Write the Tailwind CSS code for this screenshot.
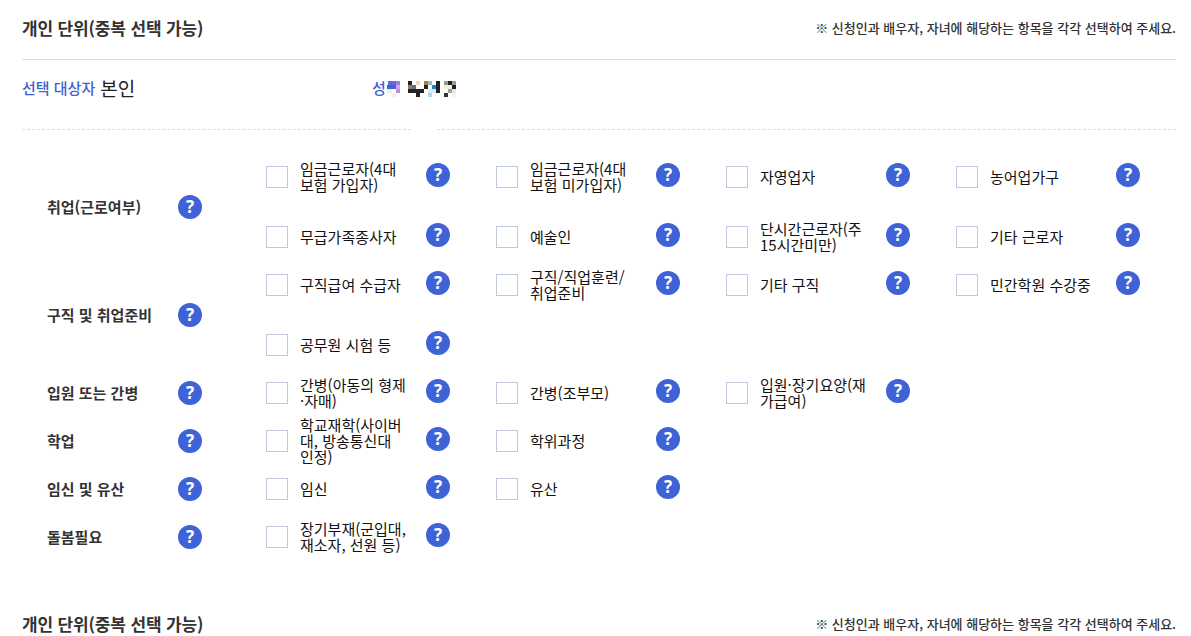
<!DOCTYPE html>
<html lang="ko">
<head>
<meta charset="utf-8">
<script src="https://cdn.jsdelivr.net/npm/@tailwindcss/browser@4"></script>
</head>
<body class="bg-white overflow-hidden font-['Noto_Sans_CJK_KR','Noto_Sans',sans-serif] text-[#111]">
<div class="w-[1191px] h-[636px] overflow-hidden pl-[22px] pr-[15px]">

  <div class="flex items-center justify-between h-[59px] pb-[4px]">
    <h2 class="text-[17px] font-bold text-[#333] tracking-[-0.15px]">개인 단위(중복 선택 가능)</h2>
    <p class="text-[13px] font-medium text-[#333]">※ 신청인과 배우자, 자녀에 해당하는 항목을 각각 선택하여 주세요.</p>
  </div>
  <div class="border-t border-[#dcdde2]"></div>

  <div class="flex items-center h-[69px] pb-[12px]">
    <div class="w-[350px] flex items-center gap-[5px]">
      <span class="text-[15px] font-medium text-[#3f62d6]">선택 대상자</span>
      <span class="text-[19px] text-[#222]">본인</span>
    </div>
    <div class="flex items-center">
      <span class="text-[15px] font-medium text-[#3f62d6]">성</span>
      <svg class="block ml-px" width="69" height="16" viewBox="387 80 69 16" shape-rendering="crispEdges">
        <rect x="388" y="80" width="4" height="4" fill="#5a6ad8"/><rect x="392" y="80" width="4" height="4" fill="#7a5fd8"/><rect x="396" y="80" width="4" height="4" fill="#a07fdc"/>
        <rect x="387" y="84" width="9" height="4" fill="#3f62d6"/><rect x="396" y="84" width="4" height="4" fill="#c9a8ec"/>
        <rect x="387" y="88" width="5" height="4" fill="#fbe8e0"/><rect x="396" y="88" width="4" height="4" fill="#b48fdc"/>
        <rect x="392" y="92" width="4" height="4" fill="#f5eef0"/>
        <rect x="408" y="80" width="4" height="4" fill="#222"/><rect x="416" y="80" width="4" height="4" fill="#f5d5b0"/><rect x="424" y="80" width="4" height="4" fill="#b07850"/><rect x="428" y="80" width="4" height="4" fill="#8ac0c0"/><rect x="436" y="80" width="4" height="4" fill="#222"/><rect x="444" y="80" width="4" height="4" fill="#999"/><rect x="448" y="80" width="4" height="4" fill="#222"/><rect x="452" y="80" width="4" height="4" fill="#999"/>
        <rect x="408" y="84" width="4" height="4" fill="#a5725a"/><rect x="412" y="84" width="4" height="4" fill="#5b7080"/><rect x="424" y="84" width="4" height="4" fill="#222"/><rect x="432" y="84" width="4" height="4" fill="#2080c8"/><rect x="436" y="84" width="4" height="4" fill="#222"/><rect x="444" y="84" width="8" height="4" fill="#f5f0d5"/><rect x="452" y="84" width="4" height="4" fill="#222"/>
        <rect x="408" y="88" width="16" height="4" fill="#222"/><rect x="428" y="88" width="8" height="4" fill="#d8ecf5"/><rect x="436" y="88" width="4" height="4" fill="#222"/><rect x="448" y="88" width="4" height="4" fill="#a8a098"/><rect x="452" y="88" width="4" height="4" fill="#e3e6f5"/>
        <rect x="416" y="92" width="4" height="4" fill="#222"/><rect x="428" y="92" width="4" height="4" fill="#a5d8f8"/><rect x="444" y="92" width="4" height="4" fill="#333"/><rect x="452" y="92" width="4" height="4" fill="#f8f5e0"/>
      </svg>
    </div>
  </div>
  <div class="flex gap-[26px] items-start">
    <div class="w-[389px] border-t border-dashed border-[#dddddd]"></div>
    <div class="w-[739px] border-t border-dashed border-[#dddddd]"></div>
  </div>

  <div class="mt-[23px]">

    <!-- 취업 -->
    <div class="flex items-center">
      <div class="w-[244px] shrink-0 pl-[25px] flex items-center">
        <span class="w-[131px] text-[15px] font-bold text-[#333]">취업(근로여부)</span>
        <svg class="size-6 shrink-0" viewBox="0 0 24 24"><circle cx="12" cy="12" r="12" fill="#3f62d6"/><text x="12" y="18" text-anchor="middle" font-size="17" font-weight="700" fill="#fff" font-family="Noto Sans">?</text></svg>
      </div>
      <div class="grid grid-cols-[230px_230px_230px_230px] gap-y-[12px]">
        <div class="h-12 flex items-center"><span class="size-[22px] shrink-0 border border-[#c0c8de]"></span><span class="w-[120px] mr-[18px] pl-3 text-[15px] leading-4">임금근로자(4대 보험 가입자)</span><svg class="size-6 shrink-0 -mt-1" viewBox="0 0 24 24"><circle cx="12" cy="12" r="12" fill="#3f62d6"/><text x="12" y="18" text-anchor="middle" font-size="17" font-weight="700" fill="#fff" font-family="Noto Sans">?</text></svg></div>
        <div class="h-12 flex items-center"><span class="size-[22px] shrink-0 border border-[#c0c8de]"></span><span class="w-[120px] mr-[18px] pl-3 text-[15px] leading-4">임금근로자(4대 보험 미가입자)</span><svg class="size-6 shrink-0 -mt-1" viewBox="0 0 24 24"><circle cx="12" cy="12" r="12" fill="#3f62d6"/><text x="12" y="18" text-anchor="middle" font-size="17" font-weight="700" fill="#fff" font-family="Noto Sans">?</text></svg></div>
        <div class="h-12 flex items-center"><span class="size-[22px] shrink-0 border border-[#c0c8de]"></span><span class="w-[120px] mr-[18px] pl-3 text-[15px] leading-4">자영업자</span><svg class="size-6 shrink-0 -mt-1" viewBox="0 0 24 24"><circle cx="12" cy="12" r="12" fill="#3f62d6"/><text x="12" y="18" text-anchor="middle" font-size="17" font-weight="700" fill="#fff" font-family="Noto Sans">?</text></svg></div>
        <div class="h-12 flex items-center"><span class="size-[22px] shrink-0 border border-[#c0c8de]"></span><span class="w-[120px] mr-[18px] pl-3 text-[15px] leading-4">농어업가구</span><svg class="size-6 shrink-0 -mt-1" viewBox="0 0 24 24"><circle cx="12" cy="12" r="12" fill="#3f62d6"/><text x="12" y="18" text-anchor="middle" font-size="17" font-weight="700" fill="#fff" font-family="Noto Sans">?</text></svg></div>
        <div class="h-12 flex items-center"><span class="size-[22px] shrink-0 border border-[#c0c8de]"></span><span class="w-[120px] mr-[18px] pl-3 text-[15px] leading-4">무급가족종사자</span><svg class="size-6 shrink-0 -mt-1" viewBox="0 0 24 24"><circle cx="12" cy="12" r="12" fill="#3f62d6"/><text x="12" y="18" text-anchor="middle" font-size="17" font-weight="700" fill="#fff" font-family="Noto Sans">?</text></svg></div>
        <div class="h-12 flex items-center"><span class="size-[22px] shrink-0 border border-[#c0c8de]"></span><span class="w-[120px] mr-[18px] pl-3 text-[15px] leading-4">예술인</span><svg class="size-6 shrink-0 -mt-1" viewBox="0 0 24 24"><circle cx="12" cy="12" r="12" fill="#3f62d6"/><text x="12" y="18" text-anchor="middle" font-size="17" font-weight="700" fill="#fff" font-family="Noto Sans">?</text></svg></div>
        <div class="h-12 flex items-center"><span class="size-[22px] shrink-0 border border-[#c0c8de]"></span><span class="w-[120px] mr-[18px] pl-3 text-[15px] leading-4">단시간근로자(주15시간미만)</span><svg class="size-6 shrink-0 -mt-1" viewBox="0 0 24 24"><circle cx="12" cy="12" r="12" fill="#3f62d6"/><text x="12" y="18" text-anchor="middle" font-size="17" font-weight="700" fill="#fff" font-family="Noto Sans">?</text></svg></div>
        <div class="h-12 flex items-center"><span class="size-[22px] shrink-0 border border-[#c0c8de]"></span><span class="w-[120px] mr-[18px] pl-3 text-[15px] leading-4">기타 근로자</span><svg class="size-6 shrink-0 -mt-1" viewBox="0 0 24 24"><circle cx="12" cy="12" r="12" fill="#3f62d6"/><text x="12" y="18" text-anchor="middle" font-size="17" font-weight="700" fill="#fff" font-family="Noto Sans">?</text></svg></div>
      </div>
    </div>

    <!-- 구직 -->
    <div class="flex items-center">
      <div class="w-[244px] shrink-0 pl-[25px] flex items-center">
        <span class="w-[131px] text-[15px] font-bold text-[#333]">구직 및 취업준비</span>
        <svg class="size-6 shrink-0" viewBox="0 0 24 24"><circle cx="12" cy="12" r="12" fill="#3f62d6"/><text x="12" y="18" text-anchor="middle" font-size="17" font-weight="700" fill="#fff" font-family="Noto Sans">?</text></svg>
      </div>
      <div class="grid grid-cols-[230px_230px_230px_230px] gap-y-[12px]">
        <div class="h-12 flex items-center"><span class="size-[22px] shrink-0 border border-[#c0c8de]"></span><span class="w-[120px] mr-[18px] pl-3 text-[15px] leading-4">구직급여 수급자</span><svg class="size-6 shrink-0 -mt-1" viewBox="0 0 24 24"><circle cx="12" cy="12" r="12" fill="#3f62d6"/><text x="12" y="18" text-anchor="middle" font-size="17" font-weight="700" fill="#fff" font-family="Noto Sans">?</text></svg></div>
        <div class="h-12 flex items-center"><span class="size-[22px] shrink-0 border border-[#c0c8de]"></span><span class="w-[120px] mr-[18px] pl-3 text-[15px] leading-4">구직/직업훈련/취업준비</span><svg class="size-6 shrink-0 -mt-1" viewBox="0 0 24 24"><circle cx="12" cy="12" r="12" fill="#3f62d6"/><text x="12" y="18" text-anchor="middle" font-size="17" font-weight="700" fill="#fff" font-family="Noto Sans">?</text></svg></div>
        <div class="h-12 flex items-center"><span class="size-[22px] shrink-0 border border-[#c0c8de]"></span><span class="w-[120px] mr-[18px] pl-3 text-[15px] leading-4">기타 구직</span><svg class="size-6 shrink-0 -mt-1" viewBox="0 0 24 24"><circle cx="12" cy="12" r="12" fill="#3f62d6"/><text x="12" y="18" text-anchor="middle" font-size="17" font-weight="700" fill="#fff" font-family="Noto Sans">?</text></svg></div>
        <div class="h-12 flex items-center"><span class="size-[22px] shrink-0 border border-[#c0c8de]"></span><span class="w-[120px] mr-[18px] pl-3 text-[15px] leading-4">민간학원 수강중</span><svg class="size-6 shrink-0 -mt-1" viewBox="0 0 24 24"><circle cx="12" cy="12" r="12" fill="#3f62d6"/><text x="12" y="18" text-anchor="middle" font-size="17" font-weight="700" fill="#fff" font-family="Noto Sans">?</text></svg></div>
        <div class="h-12 flex items-center"><span class="size-[22px] shrink-0 border border-[#c0c8de]"></span><span class="w-[120px] mr-[18px] pl-3 text-[15px] leading-4">공무원 시험 등</span><svg class="size-6 shrink-0 -mt-1" viewBox="0 0 24 24"><circle cx="12" cy="12" r="12" fill="#3f62d6"/><text x="12" y="18" text-anchor="middle" font-size="17" font-weight="700" fill="#fff" font-family="Noto Sans">?</text></svg></div>
      </div>
    </div>

    <!-- 입원 -->
    <div class="flex items-center">
      <div class="w-[244px] shrink-0 pl-[25px] flex items-center">
        <span class="w-[131px] text-[15px] font-bold text-[#333]">입원 또는 간병</span>
        <svg class="size-6 shrink-0" viewBox="0 0 24 24"><circle cx="12" cy="12" r="12" fill="#3f62d6"/><text x="12" y="18" text-anchor="middle" font-size="17" font-weight="700" fill="#fff" font-family="Noto Sans">?</text></svg>
      </div>
      <div class="grid grid-cols-[230px_230px_230px_230px]">
        <div class="h-12 flex items-center"><span class="size-[22px] shrink-0 border border-[#c0c8de]"></span><span class="w-[120px] mr-[18px] pl-3 text-[15px] leading-4">간병(아동의 형제 ·자매)</span><svg class="size-6 shrink-0 -mt-1" viewBox="0 0 24 24"><circle cx="12" cy="12" r="12" fill="#3f62d6"/><text x="12" y="18" text-anchor="middle" font-size="17" font-weight="700" fill="#fff" font-family="Noto Sans">?</text></svg></div>
        <div class="h-12 flex items-center"><span class="size-[22px] shrink-0 border border-[#c0c8de]"></span><span class="w-[120px] mr-[18px] pl-3 text-[15px] leading-4">간병(조부모)</span><svg class="size-6 shrink-0 -mt-1" viewBox="0 0 24 24"><circle cx="12" cy="12" r="12" fill="#3f62d6"/><text x="12" y="18" text-anchor="middle" font-size="17" font-weight="700" fill="#fff" font-family="Noto Sans">?</text></svg></div>
        <div class="h-12 flex items-center"><span class="size-[22px] shrink-0 border border-[#c0c8de]"></span><span class="w-[120px] mr-[18px] pl-3 text-[15px] leading-4">입원·장기요양(재가급여)</span><svg class="size-6 shrink-0 -mt-1" viewBox="0 0 24 24"><circle cx="12" cy="12" r="12" fill="#3f62d6"/><text x="12" y="18" text-anchor="middle" font-size="17" font-weight="700" fill="#fff" font-family="Noto Sans">?</text></svg></div>
      </div>
    </div>

    <!-- 학업 -->
    <div class="flex items-center">
      <div class="w-[244px] shrink-0 pl-[25px] flex items-center">
        <span class="w-[131px] text-[15px] font-bold text-[#333]">학업</span>
        <svg class="size-6 shrink-0" viewBox="0 0 24 24"><circle cx="12" cy="12" r="12" fill="#3f62d6"/><text x="12" y="18" text-anchor="middle" font-size="17" font-weight="700" fill="#fff" font-family="Noto Sans">?</text></svg>
      </div>
      <div class="grid grid-cols-[230px_230px_230px_230px]">
        <div class="h-12 flex items-center"><span class="size-[22px] shrink-0 border border-[#c0c8de]"></span><span class="w-[120px] mr-[18px] pl-3 text-[15px] leading-4">학교재학(사이버대, 방송통신대 인정)</span><svg class="size-6 shrink-0 -mt-1" viewBox="0 0 24 24"><circle cx="12" cy="12" r="12" fill="#3f62d6"/><text x="12" y="18" text-anchor="middle" font-size="17" font-weight="700" fill="#fff" font-family="Noto Sans">?</text></svg></div>
        <div class="h-12 flex items-center"><span class="size-[22px] shrink-0 border border-[#c0c8de]"></span><span class="w-[120px] mr-[18px] pl-3 text-[15px] leading-4">학위과정</span><svg class="size-6 shrink-0 -mt-1" viewBox="0 0 24 24"><circle cx="12" cy="12" r="12" fill="#3f62d6"/><text x="12" y="18" text-anchor="middle" font-size="17" font-weight="700" fill="#fff" font-family="Noto Sans">?</text></svg></div>
      </div>
    </div>

    <!-- 임신 -->
    <div class="flex items-center">
      <div class="w-[244px] shrink-0 pl-[25px] flex items-center">
        <span class="w-[131px] text-[15px] font-bold text-[#333]">임신 및 유산</span>
        <svg class="size-6 shrink-0" viewBox="0 0 24 24"><circle cx="12" cy="12" r="12" fill="#3f62d6"/><text x="12" y="18" text-anchor="middle" font-size="17" font-weight="700" fill="#fff" font-family="Noto Sans">?</text></svg>
      </div>
      <div class="grid grid-cols-[230px_230px_230px_230px]">
        <div class="h-12 flex items-center"><span class="size-[22px] shrink-0 border border-[#c0c8de]"></span><span class="w-[120px] mr-[18px] pl-3 text-[15px] leading-4">임신</span><svg class="size-6 shrink-0 -mt-1" viewBox="0 0 24 24"><circle cx="12" cy="12" r="12" fill="#3f62d6"/><text x="12" y="18" text-anchor="middle" font-size="17" font-weight="700" fill="#fff" font-family="Noto Sans">?</text></svg></div>
        <div class="h-12 flex items-center"><span class="size-[22px] shrink-0 border border-[#c0c8de]"></span><span class="w-[120px] mr-[18px] pl-3 text-[15px] leading-4">유산</span><svg class="size-6 shrink-0 -mt-1" viewBox="0 0 24 24"><circle cx="12" cy="12" r="12" fill="#3f62d6"/><text x="12" y="18" text-anchor="middle" font-size="17" font-weight="700" fill="#fff" font-family="Noto Sans">?</text></svg></div>
      </div>
    </div>

    <!-- 돌봄 -->
    <div class="flex items-center">
      <div class="w-[244px] shrink-0 pl-[25px] flex items-center">
        <span class="w-[131px] text-[15px] font-bold text-[#333]">돌봄필요</span>
        <svg class="size-6 shrink-0" viewBox="0 0 24 24"><circle cx="12" cy="12" r="12" fill="#3f62d6"/><text x="12" y="18" text-anchor="middle" font-size="17" font-weight="700" fill="#fff" font-family="Noto Sans">?</text></svg>
      </div>
      <div class="grid grid-cols-[230px_230px_230px_230px]">
        <div class="h-12 flex items-center"><span class="size-[22px] shrink-0 border border-[#c0c8de]"></span><span class="w-[120px] mr-[18px] pl-3 text-[15px] leading-4">장기부재(군입대, 재소자, 선원 등)</span><svg class="size-6 shrink-0 -mt-1" viewBox="0 0 24 24"><circle cx="12" cy="12" r="12" fill="#3f62d6"/><text x="12" y="18" text-anchor="middle" font-size="17" font-weight="700" fill="#fff" font-family="Noto Sans">?</text></svg></div>
      </div>
    </div>
  </div>

  <div class="flex items-center justify-between h-[59px] mt-[33px]">
    <h2 class="text-[17px] font-bold text-[#333] tracking-[-0.15px]">개인 단위(중복 선택 가능)</h2>
    <p class="text-[13px] font-medium text-[#333]">※ 신청인과 배우자, 자녀에 해당하는 항목을 각각 선택하여 주세요.</p>
  </div>
</div>
</body>
</html>
